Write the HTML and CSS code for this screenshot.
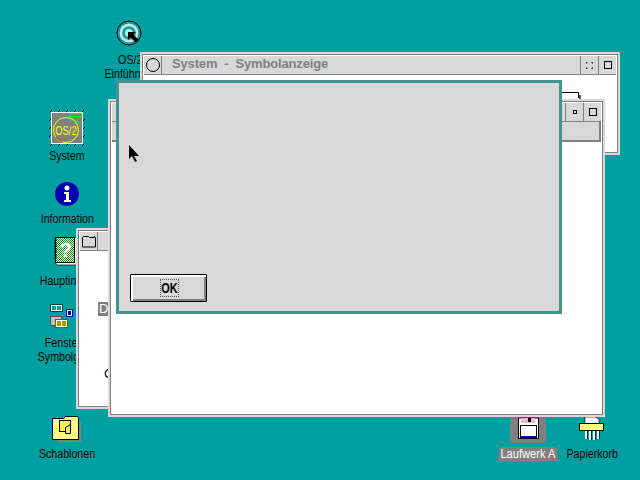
FILE: index.html
```html
<!DOCTYPE html>
<html lang="de">
<head>
<meta charset="utf-8">
<title>OS/2 Desktop</title>
<link rel="stylesheet" href="styles.css">
</head>
<body>
<main class="desktop">
  <svg class="defs" width="0" height="0">
    <defs>
      <pattern id="dither-yellow" width="2" height="2" patternUnits="userSpaceOnUse"><rect width="2" height="2" fill="#ffff00"/><rect width="1" height="1" fill="#fff"/><rect x="1" y="1" width="1" height="1" fill="#fff"/></pattern>
      <pattern id="dither-green" width="2" height="2" patternUnits="userSpaceOnUse"><rect width="2" height="2" fill="#fff"/><rect width="1" height="1" fill="#00a000"/><rect x="1" y="1" width="1" height="1" fill="#00a000"/></pattern>
    </defs>
  </svg>
  <div class="icon icon-intro">
    <svg width="32" height="32" viewBox="0 0 32 32"><circle cx="16" cy="16" r="12" fill="#00a0a0" stroke="#000"/><circle cx="16" cy="16" r="9.500" fill="#c8e4e4"/><circle cx="16" cy="16" r="6.800" fill="#00a0a0"/><circle cx="16" cy="16" r="4" fill="#c8e4e4"/><path d="M15 15h8l-2.600 2.600 5 5-2.800 2.800-5-5L15 23z" fill="#000"/></svg>
    <span class="label">OS/2<br>Einführung</span>
  </div>
  <div class="icon icon-system">
    <svg width="36" height="36" viewBox="0 0 36 36"><path d="M1 3l2-2M9 3l2-2M17 3l2-2M25 3l2-2M33 3l2-2M1 37l2-2M9 37l2-2M17 37l2-2M25 37l2-2M33 37l2-2M0 12l2-2M0 20l2-2M0 28l2-2M34 12l2-2M34 20l2-2M34 28l2-2" stroke="#000"/><rect x="2.500" y="3.500" width="31" height="31" fill="#808080" stroke="#fff"/><circle cx="17" cy="21" r="12.500" fill="none" stroke="#ff0"/><path d="M20.500 4.500h12v3h-12zM23 7.500l4 5 6 2" fill="none" stroke="#0f0"/><path d="M7 28l6 5" stroke="#f00"/><text transform="translate(17 25.500) scale(.78 1)" class="os2">OS/2</text></svg>
    <span class="label">System</span>
  </div>
  <div class="icon icon-info">
    <svg width="26" height="26" viewBox="0 0 26 26"><circle cx="13" cy="13" r="12" fill="#0000b0"/><circle cx="13" cy="7" r="2.500" fill="#fff"/><path d="M10 11h5v8h2v2h-7v-2h2v-6h-2z" fill="#fff"/></svg>
    <span class="label">Information</span>
  </div>
  <div class="icon icon-help">
    <svg width="32" height="32" viewBox="0 0 32 32"><path d="M6 27l2 3h24v-3z" fill="#fff" stroke="#000" stroke-width=".7"/><path d="M25 3h7v24h-7z" fill="#ffffd0"/><rect x="6.500" y="2.500" width="19" height="25" fill="url(#dither-green)" stroke="#000"/><path d="M5 5h3M5 8h3M5 11h3M5 14h3M5 17h3M5 20h3M5 23h3" stroke="#000"/><text x="16.500" y="22" class="q">?</text></svg>
    <span class="label">Hauptindex</span>
  </div>
  <div class="icon icon-group">
    <svg width="36" height="34" viewBox="0 0 36 34"><rect x="1.500" y="1.500" width="12" height="7" fill="#fff" stroke="#004040"/><path d="M3 3h4v4H3zM8 3h4v4H8z" fill="#00a0a0"/><rect x="17.500" y="6.500" width="6" height="7" fill="#fff" stroke="#000080"/><rect x="19" y="8" width="3" height="4" fill="#0000b0"/><rect x="1.500" y="13.500" width="11" height="9" fill="#c0c0c0" stroke="#555"/><rect x="6.500" y="16.500" width="12" height="8" fill="#fff" stroke="#666600"/><path d="M8 18h4v5H8zM13 18h4v5h-4z" fill="#a0a000"/></svg>
    <span class="label">Fenster-<br>Symbolgrp.</span>
  </div>
  <div class="icon icon-template">
    <svg width="32" height="32" viewBox="0 0 32 32"><path d="M3 8h26v20H5z" fill="#808080" transform="translate(1 2)"/><path d="M1.500 6.500h11l2-2h12l1 2v21h-26z" fill="url(#dither-yellow)" stroke="#000"/><rect x="8.500" y="8.500" width="11" height="11" fill="#f8f060" stroke="#000"/><path d="M14.500 15.500l5-3v9h-5z" fill="#f8f060" stroke="#000"/></svg>
    <span class="label">Schablonen</span>
  </div>
  <div class="icon icon-drive">
    <div class="drive-bg">
      <svg width="21" height="25" viewBox="0 0 21 25"><path d="M.5 0h20v20.500H.5z" fill="#fff" stroke="#000"/><rect x="3" y="0" width="14" height="5" fill="#c8c8c8"/><rect x="10" y="0" width="3" height="4" fill="#000"/><rect x="2.500" y="7.500" width="16" height="13" fill="#fff" stroke="#000"/><rect x="3" y="18" width="15" height="2" fill="#0000c0"/></svg>
    </div>
    <span class="label label-selected">Laufwerk A</span>
  </div>
  <div class="icon icon-trash">
    <svg width="28" height="28" viewBox="0 0 28 28"><path d="M7 2h10l4 2v8H7z" fill="#fff" stroke="#000" stroke-width=".6"/><rect x="1.500" y="8.500" width="24" height="7" fill="url(#dither-yellow)" stroke="#000"/><path d="M8 16v8M12 16v9M16 16v9M20 16v8" stroke="#fff" stroke-width="2"/><path d="M9.500 16v8M13.500 16v9M17.500 16v9M21.500 16v8" stroke="#000" stroke-width=".7"/></svg>
    <span class="label">Papierkorb</span>
  </div>

  <section class="window win-back">
    <header class="titlebar">
      <span class="ctl ctl-sys">
        <svg width="16" height="14" viewBox="0 0 16 14"><path d="M1.500 13V3.500l1-1h5l1 1h5v-1l1 1V13z" fill="#d8d8d8" stroke="#000"/></svg>
      </span>
      <span class="bar"></span>
    </header>
    <div class="client"><span class="frag frag-d">D</span><span class="frag frag-c">C</span></div>
  </section>

  <section class="window win-system">
    <header class="titlebar">
      <span class="ctl ctl-sys">
        <svg width="16" height="16" viewBox="0 0 16 16"><circle cx="8" cy="8" r="6.500" fill="none" stroke="#000"/></svg>
      </span>
      <span class="bar title">System  -  Symbolanzeige</span>
      <span class="ctl"><svg width="7" height="7" viewBox="0 0 7 7"><path d="M0 2V0h2M5 0h2v2M7 5v2H5M2 7H0V5" fill="none" stroke="#000"/></svg></span>
      <span class="ctl"><svg width="8" height="8" viewBox="0 0 8 8"><rect x=".5" y=".5" width="7" height="7" fill="none" stroke="#000"/></svg></span>
    </header>
    <div class="client"><span class="wire"></span></div>
  </section>

  <section class="window win-front">
    <header class="titlebar">
      <span class="bar"></span>
      <span class="ctl"><svg width="4" height="4" viewBox="0 0 4 4"><rect x=".5" y=".5" width="3" height="3" fill="none" stroke="#000"/></svg></span>
      <span class="ctl"><svg width="8" height="8" viewBox="0 0 8 8"><rect x=".5" y=".5" width="7" height="7" fill="none" stroke="#000"/></svg></span>
    </header>
    <div class="menubar"></div>
    <div class="client"></div>
  </section>

  <section class="dialog">
    <div class="dialog-body">
      <button class="ok" type="button"><span class="ok-text"><span class="ok-glyphs">OK</span></span></button>
    </div>
  </section>

  <svg class="cursor" width="11" height="17" viewBox="0 0 11 17"><path d="M0 0v14l3-3 3 6 2-1-3-5h5z" fill="#000"/></svg>
</main>
</body>
</html>
```

FILE: styles.css
```css
* { box-sizing: border-box; }
html, body { margin: 0; padding: 0; }
.desktop {
  position: relative;
  width: 640px;
  height: 480px;
  overflow: hidden;
  background: #00a0a0;
  font-family: "Liberation Sans", Arial, sans-serif;
  font-size: 12.5px;
  color: #000;
}
.defs { position: absolute; }
.icon {
  position: absolute;
  display: flex;
  flex-direction: column;
  align-items: center;
  width: 96px;
}
.icon svg { display: block; overflow: visible; }
.label {
  text-align: center;
  line-height: 14px;
  white-space: nowrap;
  transform: scaleX(.85);
}
.icon-intro { left: 81px; top: 17px; }
.icon-intro .label { margin: 4px 0 0 2px; }
.icon-system { left: 19px; top: 109px; }
.icon-system .label { margin-top: 4px; }
.icon-info { left: 19px; top: 181px; }
.icon-info .label { margin-top: 5px; }
.icon-help { left: 17px; top: 235px; }
.icon-help .label { margin-top: 7px; margin-left: 4px; }
.icon-group { left: 19px; top: 303px; }
.icon-group .label { margin: -1px 0 0 -4px; }
.icon-template { left: 19px; top: 412px; }
.icon-template .label { margin-top: 3px; }
.icon-drive { left: 480px; top: 418px; }
.drive-bg {
  width: 36px;
  height: 25px;
  background: #808080;
  display: flex;
  justify-content: center;
}
.icon-drive .label { margin-top: 4px; }
.label-selected {
  background: #808080;
  color: #fff;
  padding: 0 2px;
  transform: scaleX(.89);
}
.icon-trash { left: 544px; top: 415px; }
.icon-trash .label { margin-top: 4px; }
.os2 { font: 12px "Liberation Sans", Arial, sans-serif; fill: #ff0; text-anchor: middle; }
.q { font: bold 20px "Liberation Sans", Arial, sans-serif; fill: #fff; text-anchor: middle; }

.window {
  position: absolute;
  background: #fff;
  display: flex;
  flex-direction: column;
  border: 2px solid #d8d8d8;
  box-shadow: inset 1px 1px 0 #808080, inset -1px -1px 0 #808080;
  padding: 2px;
}
.win-back { left: 76px; top: 228px; width: 60px; height: 181px; }
.win-system { left: 140px; top: 52px; width: 480px; height: 103px; }
.win-front { left: 108px; top: 99px; width: 497px; height: 318px; }
.titlebar {
  display: flex;
  height: 19px;
  flex: none;
  gap: 1px;
  background: #808080;
  border-bottom: 1px solid #808080;
}
.bar, .ctl {
  background: #d8d8d8;
  display: flex;
  align-items: center;
  justify-content: center;
}
.bar { flex: 1; justify-content: flex-start; }
.ctl { width: 17px; flex: none; }
.title {
  padding: 0 0 3px 10px;
  font-weight: bold;
  font-size: 13px;
  color: #808080;
  white-space: pre;
  letter-spacing: -0.15px;
}
.client { flex: 1; background: #fff; position: relative; }
.menubar { height: 20px; flex: none; background: #d8d8d8; border-bottom: 2px solid #808080; border-right: 2px solid #808080; }
.frag { position: absolute; font-size: 13px; line-height: 14px; }
.frag-d { left: 18px; top: 51px; background: #808080; color: #fff; padding: 0 1px; }
.frag-c { left: 24px; top: 116px; }
.wire {
  position: absolute;
  right: 37px;
  top: 17px;
  width: 45px;
  height: 6px;
  border-top: 1px solid #000;
  border-right: 1px solid #000;
}
.wire::after {
  content: "";
  position: absolute;
  right: -3px;
  top: 2px;
  width: 2px;
  height: 4px;
  background: #555;
}
.dialog {
  position: absolute;
  left: 116px;
  top: 80px;
  width: 446px;
  height: 234px;
  padding: 3px;
  background: repeating-conic-gradient(#808080 0 25%, #00a8a8 0 50%) 0 0 / 2px 2px;
}
.dialog-body {
  height: 100%;
  background: #d8d8d8;
  padding: 191px 0 0 11px;
}
.ok {
  display: flex;
  align-items: center;
  justify-content: center;
  width: 77px;
  height: 28px;
  padding: 0;
  background: #d8d8d8;
  border: 1px solid #000;
  border-radius: 1px;
  box-shadow: inset 1px 1px 0 #fff, inset 2px 2px 0 #fff, inset -1px -1px 0 #808080, inset -2px -2px 0 #808080;
  font: 14px "Liberation Sans", Arial, sans-serif;
  color: #000;
}
.ok-text {
  display: flex;
  align-items: center;
  justify-content: center;
  width: 19px;
  height: 18px;
  margin: 0 0 1px 1px;
  border: 1px dotted #555;
}
.ok-glyphs { display: block; transform: scaleX(.78); font-weight: bold; }
.cursor { position: absolute; left: 129px; top: 145px; }
```
